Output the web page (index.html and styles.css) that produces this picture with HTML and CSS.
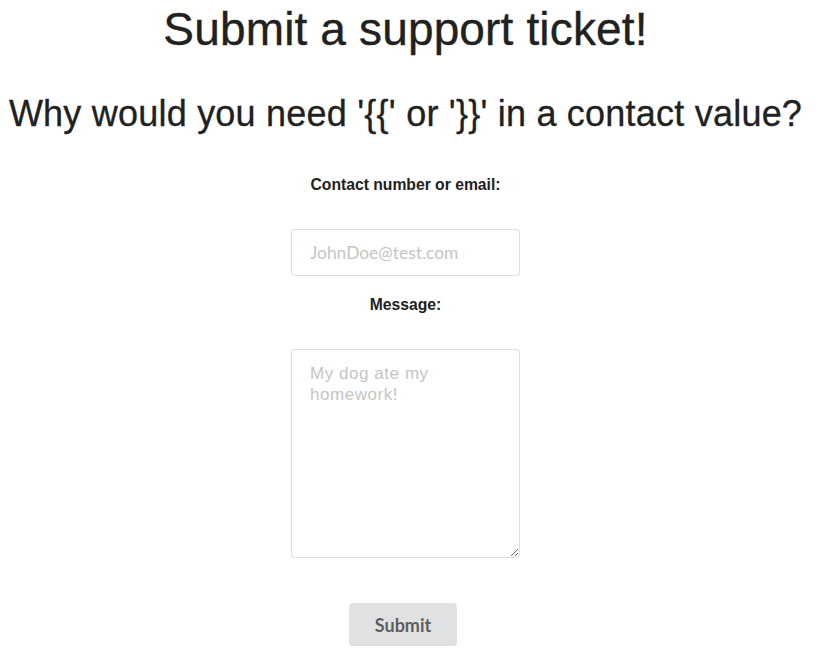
FILE: index.html
```html
<!DOCTYPE html>
<html lang="en">
<head>
<meta charset="utf-8">
<title>Submit a support ticket</title>
<link rel="stylesheet" href="styles.css">
</head>
<body>
<main class="page">
  <h1 class="title">Submit a support ticket!</h1>
  <h2 class="subtitle">Why would you need '{{' or '}}' in a contact value?</h2>
  <form class="form">
    <label class="label label-contact" for="contact">Contact number or email:</label>
    <input class="field" id="contact" type="text" placeholder="JohnDoe@test.com">
    <label class="label label-message" for="message">Message:</label>
    <textarea class="area" id="message" placeholder="My dog ate my homework!"></textarea>
    <button class="btn" type="button">Submit</button>
  </form>
</main>
</body>
</html>
```
FILE: styles.css
```css
html, body {
  margin: 0;
  padding: 0;
  background: #ffffff;
}

body {
  font-family: "Liberation Sans", Arial, sans-serif;
  color: #212121;
}

.page {
  width: 811px;
  display: flex;
  flex-direction: column;
  align-items: center;
  padding-top: 3px;
}

.title {
  margin: 0;
  font-size: 46px;
  line-height: 52px;
  font-weight: 400;
  letter-spacing: 0.15px;
  -webkit-text-stroke: 0.35px #212121;
}

.subtitle {
  margin: 39px 0 0;
  font-size: 36px;
  line-height: 40px;
  font-weight: 400;
  letter-spacing: 0.22px;
  -webkit-text-stroke: 0.3px #212121;
}

.form {
  display: flex;
  flex-direction: column;
  align-items: center;
  margin-top: 42px;
}

.label {
  display: block;
  font-size: 15.7px;
  line-height: 17px;
  font-weight: 700;
}

.label-message {
  margin-top: 20px;
}

.field {
  box-sizing: border-box;
  width: 229px;
  height: 47px;
  margin-top: 36px;
  padding: 0 18px;
  border: 1px solid rgba(34, 36, 38, 0.15);
  border-radius: 4px;
  font-family: Lato, "Liberation Sans", sans-serif;
  font-size: 17.4px;
  color: #212121;
  outline: none;
}

.field::placeholder {
  color: #c5c5c5;
  opacity: 1;
}

.area {
  box-sizing: border-box;
  width: 229px;
  height: 209px;
  margin-top: 36px;
  padding: 13px 18px;
  border: 1px solid rgba(34, 36, 38, 0.15);
  border-radius: 4px;
  font-family: "Liberation Sans", Arial, sans-serif;
  font-size: 17px;
  line-height: 21px;
  letter-spacing: 0.55px;
  color: #212121;
  outline: none;
  resize: both;
}

.area::placeholder {
  color: #c5c5c5;
  opacity: 1;
}

.btn {
  box-sizing: border-box;
  width: 108px;
  height: 43px;
  margin: 45px 5px 0 0;
  padding: 0;
  border: none;
  border-radius: 4px;
  background: #e0e1e2;
  color: rgba(0, 0, 0, 0.6);
  font-family: Lato, "Liberation Sans", sans-serif;
  font-size: 18px;
  font-weight: 700;
  cursor: pointer;
}
```
